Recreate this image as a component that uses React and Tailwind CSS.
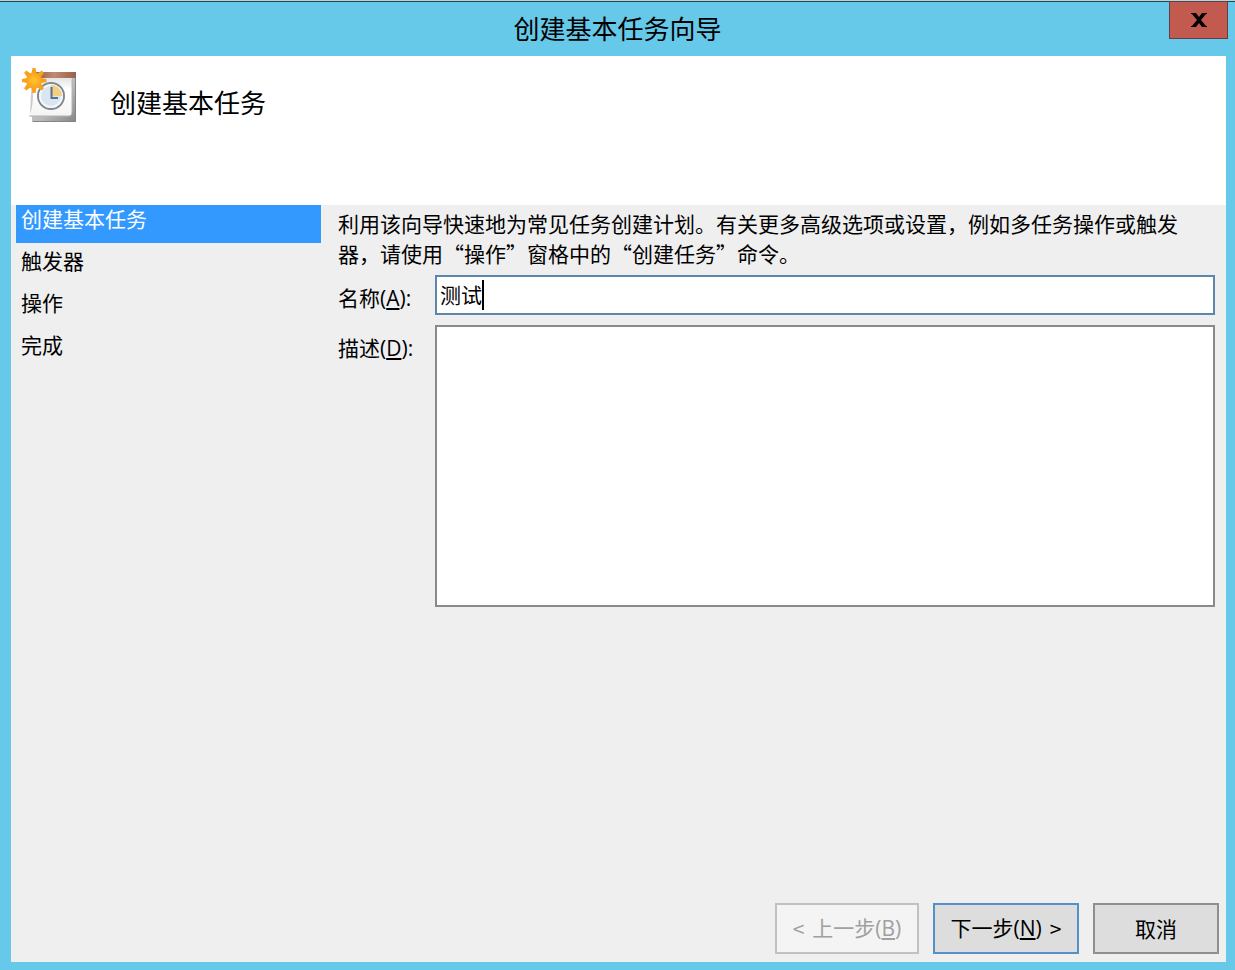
import React, { useState } from 'react';

const STEPS = ['创建基本任务', '触发器', '操作', '完成'];
const RAYS = [0, 45, 90, 135, 180, 225, 270, 315];
const CHAR_WIDTH = 21;

// Latin part of a caption with its access key underlined, e.g. (A):
const AccessKey = ({ letter, suffix = '' }) => (
    <span className="font-['Open_Sans','Noto_Sans_CJK_SC',sans-serif]">
        (<span className="underline decoration-2 underline-offset-2">{letter}</span>){suffix}
    </span>
);

const TaskIcon = () => (
    <svg viewBox="0 0 56 58" className="h-[58px] w-14 shrink-0" aria-hidden="true">
        <defs>
            <linearGradient id="paper" x1="0" y1="0" x2="0" y2="1">
                <stop offset="0" stopColor="#e4e4e4" />
                <stop offset="0.3" stopColor="#ffffff" />
                <stop offset="1" stopColor="#f4f4f4" />
            </linearGradient>
            <linearGradient id="back" x1="0" y1="0" x2="1" y2="1">
                <stop offset="0" stopColor="#dcdcdc" />
                <stop offset="0.6" stopColor="#b9b9b9" />
                <stop offset="1" stopColor="#858585" />
            </linearGradient>
            <linearGradient id="strip" x1="0" y1="0" x2="1" y2="0">
                <stop offset="0" stopColor="#8c5440" />
                <stop offset="0.5" stopColor="#c08a72" />
                <stop offset="1" stopColor="#9a6049" />
            </linearGradient>
            <radialGradient id="sun">
                <stop offset="0" stopColor="#ffc630" />
                <stop offset="1" stopColor="#f9a11b" />
            </radialGradient>
        </defs>
        <path d="M10 4H54V54H10V49L8 48Z" fill="url(#back)" />
        <path d="M53.500 10V53.500H11" fill="none" stroke="#858585" />
        <path d="M10 4H54V10H10Z" fill="url(#strip)" />
        <path d="M11 10H50V44C50 46 49 48 47 48H7C10 42 11 34 11 25Z" fill="url(#paper)" />
        <path d="M7 48H47C49 48 50 46 50 44V11" fill="none" stroke="#b4b4b4" />
        <circle cx="29" cy="28" r="13" fill="#d9e6f2" stroke="#80878e" strokeWidth="2" />
        <circle cx="29" cy="28" r="11" fill="none" stroke="#f4f7fa" strokeWidth="2" />
        <path d="M29 28V17A11 11 0 0 1 40 28Z" fill="#f3cf86" />
        <path d="M29.500 19V30H36" fill="none" stroke="#5b7186" strokeWidth="2" />
        {RAYS.map((angle) => (
            <path key={angle} d="M9 8L10.500 0H13.500L15 8Z" fill="#f9a11b" transform={`rotate(${angle} 12 12.5)`} />
        ))}
        <circle cx="12" cy="12.500" r="8" fill="url(#sun)" />
    </svg>
);

const TitleBar = () => (
    <header className="flex h-[54px] shrink-0 items-start pr-[7px]">
        <h1 className="flex-1 pl-[66px] pt-1.5 text-center text-[26px] leading-10">创建基本任务向导</h1>
        <button
            type="button"
            aria-label="关闭"
            className="-mt-px flex h-[38px] w-[59px] items-center justify-center border border-[#5f4045] bg-[#c25a50]"
        >
            <svg viewBox="0 0 16 14" className="h-3.5 w-4" aria-hidden="true">
                <path d="M0 0H5L8 4L11 0H16V1H15L10 7L15 13H16V14H11L8 10L5 14H0V13H1L6 7L1 1H0Z" fill="#000" />
            </svg>
        </button>
    </header>
);

const App = () => {
    const [name, setName] = useState('测试');
    const [description, setDescription] = useState('');

    return (
        <div className="flex min-h-screen flex-col border-t border-[#b5d3da] bg-[#66c9ea] font-['Noto_Sans_CJK_SC',sans-serif] text-[21px] leading-[30px] text-black">
            <div className="flex flex-1 flex-col border-t border-[#28454f]">
                <TitleBar />
                <main className="mb-2 ml-[11px] mr-[9px] flex flex-1 flex-col bg-[#efefef]">
                    <div className="flex h-[149px] shrink-0 items-start bg-white pl-[11px] pt-3">
                        <TaskIcon />
                        <h2 className="pl-8 pt-3.5 text-[26px] leading-10">创建基本任务</h2>
                    </div>

                    <div className="flex flex-1">
                        <ol className="ml-[5px] flex w-[305px] shrink-0 flex-col gap-1 leading-[26px]">
                            {STEPS.map((step, index) => (
                                <li
                                    key={step}
                                    aria-current={index === 0 ? 'step' : undefined}
                                    className={index === 0 ? 'h-[38px] bg-[#3399ff] pl-[5px] text-white' : 'h-[38px] pl-[5px]'}
                                >
                                    {step}
                                </li>
                            ))}
                        </ol>

                        <form className="ml-[17px] mr-[11px] flex-1 pt-[3px]">
                            <p>
                                利用该向导快速地为常见任务创建计划。有关更多高级选项或设置，例如多任务操作或触发器，请使用“操作”窗格中的“创建任务”命令。
                            </p>
                            <div className="mt-[7px] flex items-start">
                                <label htmlFor="name" className="w-[97px] shrink-0 pt-[7px]">
                                    名称<AccessKey letter="A" suffix=":" />
                                </label>
                                <div className="relative min-w-0 flex-1">
                                    <input
                                        id="name"
                                        type="text"
                                        value={name}
                                        onChange={(e) => setName(e.target.value)}
                                        className="block h-10 w-full border-2 border-[#5c86ab] bg-white px-[3px] pb-0.5 caret-transparent outline-none"
                                    />
                                    {/* Text caret */}
                                    <span
                                        aria-hidden="true"
                                        className="pointer-events-none absolute top-[5px] h-[30px] w-0.5 bg-black"
                                        style={{ left: 5 + name.length * CHAR_WIDTH }}
                                    />
                                </div>
                            </div>
                            <div className="mt-2.5 flex items-start">
                                <label htmlFor="description" className="w-[97px] shrink-0 pt-[7px]">
                                    描述<AccessKey letter="D" suffix=":" />
                                </label>
                                <textarea
                                    id="description"
                                    value={description}
                                    onChange={(e) => setDescription(e.target.value)}
                                    className="h-[282px] min-w-0 flex-1 resize-none border-2 border-[#8a8a8a] bg-white px-[3px] outline-none"
                                />
                            </div>
                        </form>
                    </div>

                    <footer className="flex justify-end gap-3.5 pb-2 pr-[7px]">
                        <button
                            type="button"
                            disabled
                            className="flex h-[51px] w-36 items-center justify-center gap-2 border-2 border-[#bfc1c3] bg-[#f4f4f4] pb-0.5 text-[#a0a0a0]"
                        >
                            <span>&lt;</span>
                            <span>上一步<AccessKey letter="B" /></span>
                        </button>
                        <button
                            type="button"
                            className="flex h-[51px] w-[146px] items-center justify-center gap-2 border-2 border-[#5590c8] bg-[#dddddd] pb-0.5"
                        >
                            <span>下一步<AccessKey letter="N" /></span>
                            <span>&gt;</span>
                        </button>
                        <button type="button" className="h-[51px] w-[126px] border-2 border-[#8f8f8f] bg-[#dddddd] pb-0.5">
                            取消
                        </button>
                    </footer>
                </main>
            </div>
        </div>
    );
};

export default App;
